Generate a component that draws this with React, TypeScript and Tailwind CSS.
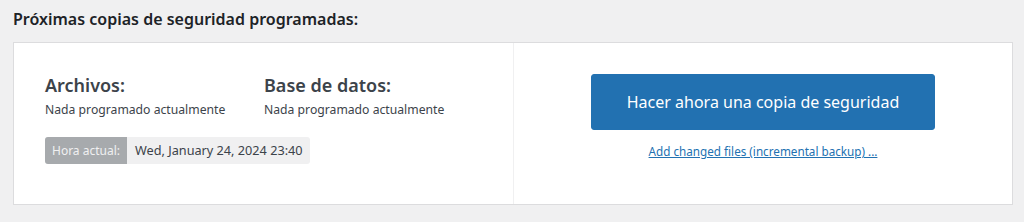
import React from "react";

export default function App() {
  return (
    <div className="w-[1024px] h-[222px] bg-[#f0f0f1] font-['Noto_Sans',sans-serif] text-[#3c434a] overflow-hidden">
      <div className="px-[13px] pt-[7px]">
        <h3 className="text-[16px] leading-[24px] font-semibold text-[#1d2327] mb-[11px]">
          Próximas copias de seguridad programadas:
        </h3>
        <div className="w-[1000px] h-[163px] bg-white border border-[#dcdcde] flex">
          <div className="w-[500px] border-r border-[#f0f0f1] pl-[31px] pt-[30px]">
            <div className="flex">
              <div className="w-[219px]">
                <div className="text-[18px] leading-[24px] font-semibold text-[#3c434a]">Archivos:</div>
                <div className="text-[12.2px] leading-[18px] mt-[4px] text-[#3c434a]">Nada programado actualmente</div>
              </div>
              <div>
                <div className="text-[18px] leading-[24px] font-semibold text-[#3c434a]">Base de datos:</div>
                <div className="text-[12.2px] leading-[18px] mt-[4px] text-[#3c434a]">Nada programado actualmente</div>
              </div>
            </div>
            <div className="mt-[18px] inline-flex h-[27px] rounded-[3px] overflow-hidden bg-[#f0f0f1]">
              <span className="bg-[#a7aaad] text-[#f0f0f1] text-[12px] px-[7px] flex items-center">Hora actual:</span>
              <span className="pl-[8px] pr-[7px] flex items-center text-[12.7px] text-[#3c434a]">Wed, January 24, 2024 23:40</span>
            </div>
          </div>
          <div className="flex-1 flex flex-col items-center pt-[31px]">
            <button className="w-[344px] h-[56px] rounded-[3px] bg-[#2271b1] border border-[#2271b1] text-white text-[16px]">
              Hacer ahora una copia de seguridad
            </button>
            <a href="#" className="mt-[13px] text-[11.7px] text-[#2271b1] underline">
              Add changed files (incremental backup) ...
            </a>
          </div>
        </div>
      </div>
    </div>
  );
}
